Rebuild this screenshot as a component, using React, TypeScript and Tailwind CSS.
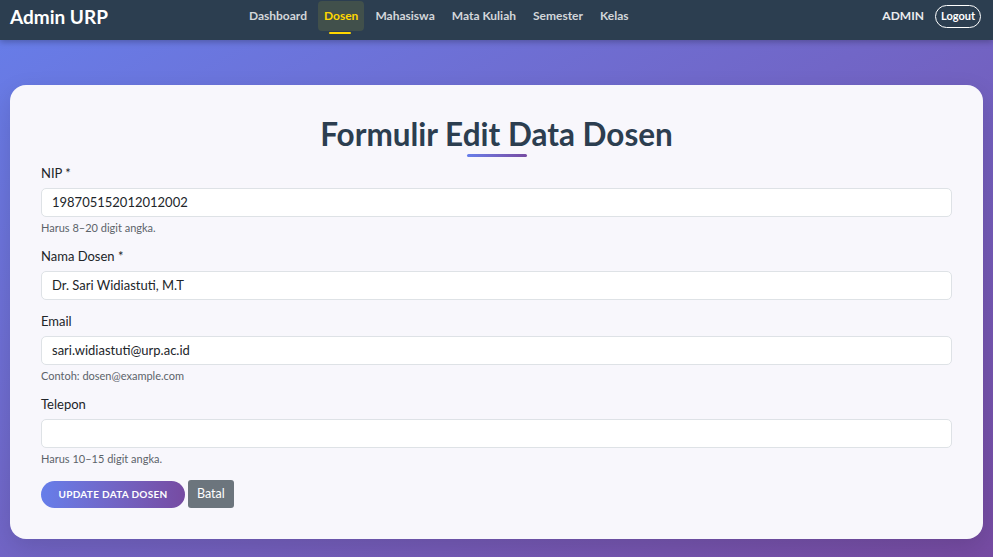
import React from "react";

const navItems = ["Dashboard", "Dosen", "Mahasiswa", "Mata Kuliah", "Semester", "Kelas"];

function Field({ label, value, help }: { label: string; value: string; help?: string }) {
  return (
    <div className="flex flex-col">
      <label className="text-[13px] leading-[16px] text-[#212529] mb-[7px]">{label}</label>
      <div className="h-[29px] w-full rounded-[5px] border border-[#dee2e6] bg-white px-[10px] flex items-center text-[13px] text-[#212529]">
        {value}
      </div>
      {help ? <div className="text-[11px] leading-[15px] text-[#5c636a] mt-[3px]">{help}</div> : null}
    </div>
  );
}

export default function App() {
  return (
    <div className="min-h-[557px] w-full bg-gradient-to-br from-[#667eea] to-[#764ba2] font-['Lato',sans-serif]">
      <nav className="h-[40px] bg-[#2c3e50] flex items-start px-[10px] shadow-[0_2px_6px_rgba(0,0,0,0.25)] relative z-10">
        <div className="h-[32px] flex items-center text-[19px] font-bold text-white leading-none">Admin URP</div>
        <div className="flex items-start gap-[5px] ml-[135px] h-[32px]">
          {navItems.map((n) => (
            <div key={n} className="relative h-full flex items-start pt-[1px]">
              <div
                className={
                  n === "Dosen"
                    ? "h-[30px] px-[6px] rounded-[4px] bg-[#41504b] text-[#ffd700] text-[12px] font-bold flex items-center"
                    : "h-[30px] px-[6px] rounded-[4px] text-[#d3d6da] text-[12px] font-bold flex items-center"
                }
              >
                {n}
              </div>
              {n === "Dosen" ? (
                <div className="absolute left-[11px] top-[32px] w-[22px] h-[2px] rounded-full bg-[#ffd700]" />
              ) : null}
            </div>
          ))}
        </div>
        <div className="ml-auto mr-[2px] h-[32px] flex items-center gap-[11px]">
          <span className="text-white text-[12px] font-bold opacity-90">ADMIN</span>
          <span className="border border-white rounded-full px-[5px] h-[23px] flex items-center text-white text-[11px] font-bold">
            Logout
          </span>
        </div>
      </nav>
      <div className="px-[10px] pt-[45px] pb-[17px]">
        <div className="rounded-[16px] bg-[#f8f7fc] px-[31px] pt-[30px] pb-[31px] shadow-[0_8px_24px_rgba(0,0,0,0.12)]">
          <div className="flex flex-col items-center">
            <h1 className="text-[31.5px] font-bold text-[#2c3e50] leading-[38px]">Formulir Edit Data Dosen</h1>
            <div className="w-[60px] h-[3px] rounded-full bg-gradient-to-r from-[#667eea] to-[#764ba2] mt-[1px]" />
          </div>
          <div className="flex flex-col gap-[13px] mt-[8px]">
            <Field label="NIP *" value="198705152012012002" help="Harus 8–20 digit angka." />
            <Field label="Nama Dosen *" value="Dr. Sari Widiastuti, M.T" />
            <Field label="Email" value="sari.widiastuti@urp.ac.id" help="Contoh: dosen@example.com" />
            <Field label="Telepon" value="" help="Harus 10–15 digit angka." />
          </div>
          <div className="flex items-center gap-[3px] mt-[14px]">
            <button className="h-[27px] w-[144px] rounded-full bg-gradient-to-r from-[#667eea] to-[#764ba2] text-white text-[10px] font-bold tracking-[0.3px] uppercase">
              Update Data Dosen
            </button>
            <button className="h-[28px] px-[9px] rounded-[3px] bg-[#6c757d] text-white text-[12.5px]">Batal</button>
          </div>
        </div>
      </div>
    </div>
  );
}
